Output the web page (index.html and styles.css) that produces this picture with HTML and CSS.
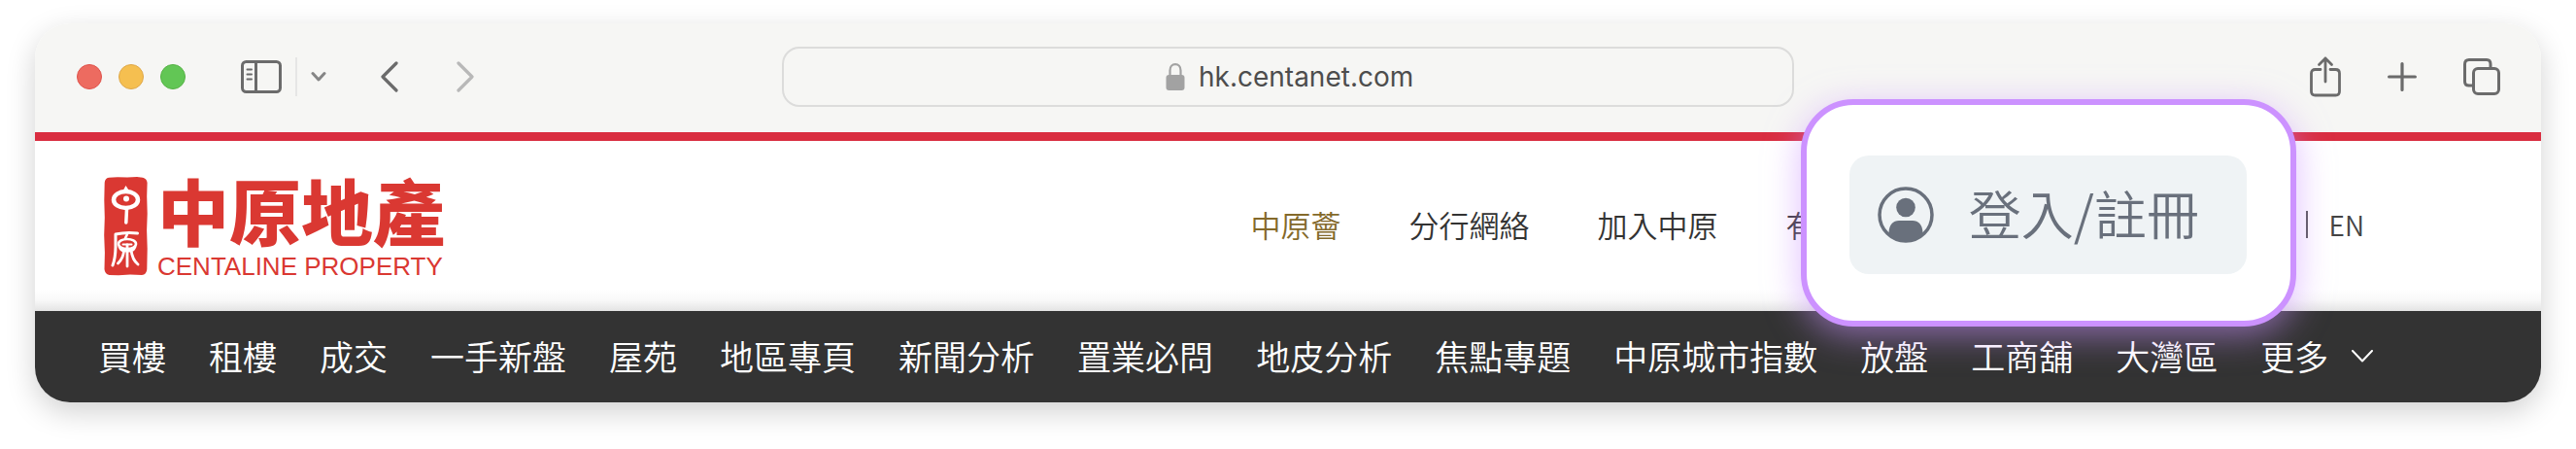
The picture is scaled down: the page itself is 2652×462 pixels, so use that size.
FILE: index.html
```html
<!DOCTYPE html>
<html lang="zh-Hant-HK">
<head>
<meta charset="utf-8">
<meta name="viewport" content="width=device-width, initial-scale=1">
<title>中原地產</title>
<link rel="stylesheet" href="styles.css">
</head>
<body>
<div class="window">
  <div class="toolbar">
    <div class="tools tools-left">
      <div class="lights">
        <span class="light light-red"></span>
        <span class="light light-yellow"></span>
        <span class="light light-green"></span>
      </div>
      <div class="sidebar-group">
        <button class="tool" aria-label="側邊欄">
          <svg width="42" height="34" viewBox="0 0 42 34" fill="none" stroke="#6b6b6b" stroke-width="3" stroke-linecap="round">
            <rect x="1.5" y="1.5" width="39" height="31" rx="4"/>
            <path d="M15.500 2V32"/>
            <path stroke-width="2" d="M6.500 9.500H11M6.500 14.500H11M6.500 19.500H11"/>
          </svg>
        </button>
        <span class="tool-divider"></span>
        <button class="tool" aria-label="選單">
          <svg width="16" height="12" viewBox="0 0 16 12" fill="none" stroke="#858585" stroke-width="3" stroke-linecap="round" stroke-linejoin="round"><path d="M2 2.500L8 9L14 2.500"/></svg>
        </button>
      </div>
      <div class="history">
        <button class="tool" aria-label="上一頁">
          <svg width="18" height="32" viewBox="0 0 18 32" fill="none" stroke="#6b6b6b" stroke-width="3.200" stroke-linecap="round" stroke-linejoin="round"><path d="M16 2L2 16L16 30"/></svg>
        </button>
        <button class="tool" aria-label="下一頁">
          <svg width="18" height="32" viewBox="0 0 18 32" fill="none" stroke="#b8b8b8" stroke-width="3.200" stroke-linecap="round" stroke-linejoin="round"><path d="M2 2L16 16L2 30"/></svg>
        </button>
      </div>
    </div>
    <label class="address">
      <svg width="20" height="28" viewBox="0 0 20 28"><path d="M4.500 13V7.500C4.500 3.500 7 1.200 10 1.200S15.500 3.500 15.500 7.500V13" fill="none" stroke="#a2a2a2" stroke-width="2.200"/><rect x="0.500" y="12" width="19" height="16" rx="3" fill="#a2a2a2"/></svg>
      <input class="address-input" type="text" value="hk.centanet.com" aria-label="網址">
    </label>
    <div class="tools tools-right">
      <button class="tool" aria-label="分享">
        <svg width="32" height="42" viewBox="0 0 32 42" fill="none" stroke="#6b6b6b" stroke-width="2.800" stroke-linecap="round" stroke-linejoin="round">
          <path d="M11 13.500H5.500C3 13.500 1.500 15 1.500 17.500V36C1.500 38.500 3 40 5.500 40H26.500C29 40 30.500 38.500 30.500 36V17.500C30.500 15 29 13.500 26.500 13.500H21"/>
          <path d="M16 26V2M9.500 8.500L16 2L22.500 8.500"/>
        </svg>
      </button>
      <button class="tool" aria-label="新分頁">
        <svg width="30" height="30" viewBox="0 0 30 30" fill="none" stroke="#6b6b6b" stroke-width="3.200" stroke-linecap="round"><path d="M15 1.600V28.400M1.600 15H28.400"/></svg>
      </button>
      <button class="tool" aria-label="分頁概覽">
        <svg width="38" height="38" viewBox="0 0 38 38" fill="none" stroke="#6b6b6b" stroke-width="3" stroke-linecap="round">
          <rect x="10.500" y="10.500" width="26" height="26" rx="4.500"/>
          <path d="M28 9V6C28 3 26.500 1.500 24 1.500H6C3 1.500 1.500 3 1.500 6V24C1.500 26.500 3 28 6 28H9"/>
        </svg>
      </button>
    </div>
  </div>

  <header class="site-header">
    <a class="brand" href="#">
      <svg class="seal" width="45" height="102" viewBox="0 0 45 102" fill="none" stroke="#fff" stroke-linecap="round" stroke-linejoin="round">
        <path fill="#da3832" stroke="none" d="M5 .8L14 .2L24 .6L34 .1L40 .7Q44 1.500 44.600 6L44.200 20L44.700 38L44.100 55L44.700 74L44.300 95Q44 100.500 39 101L27 100.600L15 101.200L5.500 101Q1 100 .5 95L.9 78L.2 60L.8 42L.3 24L.7 6Q1 1.500 5 .8Z"/>
        <ellipse cx="22.500" cy="23.500" rx="12.500" ry="8.500" stroke-width="4.500"/>
        <circle cx="23" cy="22.500" r="3" fill="#fff" stroke="none"/>
        <path fill="#fff" stroke="none" d="M22.500 9L25.500 13.500L30 16H16L20 13.500Z"/>
        <path stroke-width="3.500" d="M23.500 33L22.800 47"/>
        <path stroke-width="3" d="M34.500 58Q23 56.500 12 59V71Q12 83 9 91"/>
        <path stroke-width="2.600" d="M24 59L22 63"/>
        <ellipse cx="24" cy="69" rx="9" ry="5" stroke-width="2.600"/>
        <path stroke-width="2" d="M19.500 69.500H28.500"/>
        <path stroke-width="2.800" d="M24 70V92M20.500 75Q20.500 83 14.500 89M28 75Q29 85 35 90M16 72Q18 77 23 76M32 72Q30 77 25 76"/>
      </svg>
      <span class="brand-text">
        <span class="brand-zh">中原地產</span>
        <span class="brand-en">CENTALINE PROPERTY</span>
      </span>
    </a>
    <nav class="links">
      <a class="link link-gold" href="#">中原薈</a>
      <a class="link" href="#">分行網絡</a>
      <a class="link" href="#">加入中原</a>
      <a class="link" href="#">有</a>
    </nav>
    <div class="language">
      <span class="language-divider"></span>
      <a class="language-link" href="#">EN</a>
    </div>
  </header>

  <nav class="menu">
    <a class="menu-item" href="#">買樓</a>
    <a class="menu-item" href="#">租樓</a>
    <a class="menu-item" href="#">成交</a>
    <a class="menu-item" href="#">一手新盤</a>
    <a class="menu-item" href="#">屋苑</a>
    <a class="menu-item" href="#">地區專頁</a>
    <a class="menu-item" href="#">新聞分析</a>
    <a class="menu-item" href="#">置業必問</a>
    <a class="menu-item" href="#">地皮分析</a>
    <a class="menu-item" href="#">焦點專題</a>
    <a class="menu-item" href="#">中原城市指數</a>
    <a class="menu-item" href="#">放盤</a>
    <a class="menu-item" href="#">工商舖</a>
    <a class="menu-item" href="#">大灣區</a>
    <button class="menu-item menu-more">更多
      <svg width="22" height="13" viewBox="0 0 22 13" fill="none" stroke="#fff" stroke-width="2" stroke-linecap="round" stroke-linejoin="round"><path d="M1 1L11 11.500L21 1"/></svg>
    </button>
  </nav>

  <div class="callout">
    <button class="login">
      <svg width="58" height="58" viewBox="0 0 58 58">
        <circle cx="29" cy="29" r="27" fill="none" stroke="#69707c" stroke-width="3.500"/>
        <circle cx="29" cy="21.500" r="9.800" fill="#69707c"/>
        <path fill="#69707c" d="M11.500 49V47C12 39 16 35 22 35H36C42 35 46 39 46.500 47V49Q39 57 29 57T11.500 49Z"/>
      </svg>
      <span class="login-text">登入/註冊</span>
    </button>
  </div>
</div>
</body>
</html>
```

FILE: styles.css
```css
* {
  box-sizing: border-box;
}

body {
  margin: 0;
  padding: 24px 36px 48px;
  background: #fff;
  font-family: "Noto Sans CJK TC", "Noto Sans CJK HK", sans-serif;
  font-weight: 350;
}

a {
  color: inherit;
  text-decoration: none;
}

button {
  padding: 0;
  border: 0;
  background: none;
  color: inherit;
  font: inherit;
  cursor: pointer;
}

svg {
  display: block;
  flex: none;
}

.window {
  position: relative;
  border-radius: 36px;
  background: #fff;
  box-shadow: 0 10px 30px rgba(0, 0, 0, 0.18);
}

/* Browser toolbar */

.toolbar {
  display: grid;
  grid-template-columns: 1fr 40.4% 1fr;
  align-items: center;
  height: 112px;
  padding-bottom: 2px;
  border-radius: 36px 36px 0 0;
  background: #f6f6f4;
}

.tools {
  display: flex;
  align-items: center;
}

.tools-left {
  padding-left: 43px;
}

.tools-right {
  justify-content: flex-end;
  gap: 48px;
  padding-right: 42px;
}

.lights {
  display: flex;
  gap: 17px;
  margin-right: 57px;
}

.light {
  width: 26px;
  height: 26px;
  border: 1px solid #e0524b;
  border-radius: 50%;
  background: #ed6b60;
}

.light-yellow {
  border-color: #dfa84a;
  background: #f5bf50;
}

.light-green {
  border-color: #56b246;
  background: #62c655;
}

.sidebar-group {
  display: flex;
  align-items: center;
  gap: 14px;
  margin-right: 56px;
}

.tool-divider {
  width: 2px;
  height: 40px;
  background: #e6e6e5;
}

.history {
  display: flex;
  gap: 60px;
}

.address {
  display: flex;
  align-items: center;
  justify-content: center;
  gap: 14px;
  height: 62px;
  padding-left: 4px;
  border: 2px solid #dcdcdb;
  border-radius: 18px;
}

.address-input {
  width: 222px;
  padding: 0;
  border: 0;
  outline: 0;
  background: none;
  color: #4d4d4d;
  font: 28px/36px Inter, sans-serif;
}

/* Site header */

.site-header {
  display: flex;
  align-items: center;
  height: 184px;
  padding: 0 182px 0 71px;
  border-top: 9px solid #d92d40;
  background: linear-gradient(to top, #e4e4e4, #fafafa 12px, #fff 22px);
}

.brand {
  display: flex;
  align-items: center;
  gap: 10px;
  color: #da3832;
}

.brand-text {
  display: flex;
  flex-direction: column;
  gap: 10px;
}

.brand-zh {
  font-size: 74px;
  font-weight: 900;
  line-height: 72px;
}

.brand-en {
  font: 26px/26px "Liberation Sans", Arial, sans-serif;
}

.links {
  display: flex;
  gap: 70px;
  margin-left: auto;
  margin-right: 504px;
  padding-bottom: 4px;
  color: #333;
  font-size: 31px;
  line-height: 44px;
}

.link-gold {
  color: #84692a;
}

.language {
  display: flex;
  align-items: center;
  gap: 22px;
  padding-bottom: 4px;
}

.language-divider {
  width: 2px;
  height: 28px;
  background: #555;
}

.language-link {
  color: #444;
  font-size: 28px;
  line-height: 40px;
}

/* Main menu */

.menu {
  display: flex;
  align-items: center;
  gap: 44px;
  height: 94px;
  padding: 0 65px 2px;
  border-radius: 0 0 36px 36px;
  background: #333;
  color: #fff;
  font-size: 35px;
  line-height: 50px;
  white-space: nowrap;
}

.menu-more {
  display: flex;
  align-items: center;
  gap: 24px;
}

/* Enlarged login button over the page */

.callout {
  position: absolute;
  top: 78px;
  right: 252px;
  padding: 52px 45px 48px 44px;
  border: 6px solid #cc92ff;
  border-radius: 54px;
  background: #fff;
  box-shadow: 0 8px 36px rgba(204, 146, 255, 0.6);
}

.login {
  display: flex;
  align-items: center;
  gap: 36px;
  height: 122px;
  padding: 0 49px 0 29px;
  border-radius: 20px;
  background: #eff3f5;
  color: #69707c;
  font-size: 54px;
  line-height: 78px;
}

.login-text {
  padding-bottom: 4px;
}
```
